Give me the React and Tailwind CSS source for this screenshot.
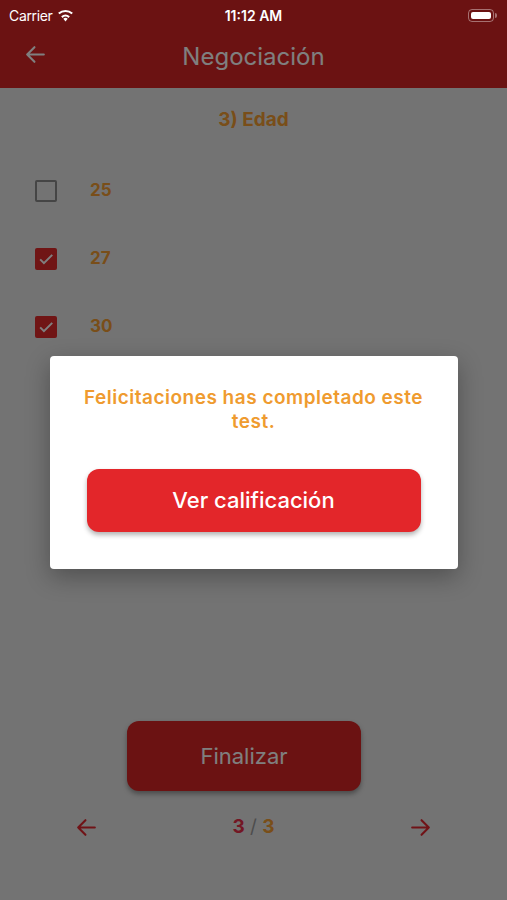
import React, { useState } from "react";

const options = [
  { label: "25", checked: false },
  { label: "27", checked: true },
  { label: "30", checked: true },
];

function Arrow({ dir = "left", className }) {
  return (
    <svg
      viewBox="0 0 24 24"
      className={className}
      fill="none"
      stroke="currentColor"
      strokeWidth="2"
      strokeLinecap="round"
      strokeLinejoin="round"
    >
      {dir === "left" ? (
        <path d="M20 12H4M11 5l-7 7 7 7" />
      ) : (
        <path d="M4 12h16M13 5l7 7-7 7" />
      )}
    </svg>
  );
}

function StatusBar() {
  return (
    <div className="relative z-20 h-[30px] flex items-center justify-between px-[9px] text-white">
      <div className="flex items-center gap-[5px] w-[120px]">
        <span className="text-[14px] font-['Inter'] tracking-tight">Carrier</span>
        <svg viewBox="0 0 20 15" className="w-[17px] h-[13px]" fill="currentColor">
          <path d="M10 14.5l2.6-3.1a4 4 0 0 0-5.2 0z" />
          <path d="M4.9 8.4l1.6 1.9a5.4 5.4 0 0 1 7 0l1.6-1.9a7.9 7.9 0 0 0-10.2 0z" />
          <path d="M1.3 4.2l1.6 1.9a10.9 10.9 0 0 1 14.2 0l1.6-1.9a13.4 13.4 0 0 0-17.4 0z" />
        </svg>
      </div>
      <span className="text-[14px] font-semibold font-['Inter']">11:12 AM</span>
      <div className="w-[120px] flex justify-end pr-[1px]">
        <div className="flex items-center">
          <div className="w-[26px] h-[13px] rounded-[4px] border border-white/40 p-[2px]">
            <div className="w-full h-full bg-white rounded-[2px]" />
          </div>
          <div className="w-[2px] h-[5px] bg-white/40 rounded-r-sm ml-[1px]" />
        </div>
      </div>
    </div>
  );
}

export default function App() {
  const [items, setItems] = useState(options);

  const toggle = (i) =>
    setItems(items.map((it, idx) => (idx === i ? { ...it, checked: !it.checked } : it)));

  return (
    <div className="relative w-[507px] h-[900px] overflow-hidden bg-[#e6e6e6] font-['Inter',sans-serif]">
      <header className="bg-[#d62424]">
        <StatusBar />
        <div className="h-[58px] flex items-center relative">
          <Arrow dir="left" className="absolute left-[23px] top-[12px] w-[25px] h-[25px] text-white" />
          <h1 className="flex-1 text-center text-[24px] text-[#ffffff] pb-[5px]">Negociación</h1>
        </div>
      </header>

      <main className="flex flex-col h-[812px]">
        <h2 className="text-center text-[19px] font-bold text-[#f39c32] mt-[18px]">3) Edad</h2>

        <ul className="flex flex-col gap-[46px] mt-[45px] pl-[35px]">
          {items.map((it, i) => (
            <li key={it.label} className="flex items-center h-[22px]">
              <button
                onClick={() => toggle(i)}
                className={
                  it.checked
                    ? "w-[22px] h-[22px] rounded-[2px] bg-[#e02a2a] flex items-center justify-center"
                    : "w-[22px] h-[22px] rounded-[2px] border-[2.5px] border-[#8a8a8a]"
                }
              >
                {it.checked && (
                  <svg viewBox="0 0 24 24" className="w-[20px] h-[20px]" fill="none" stroke="#ffffff" strokeWidth="2.4">
                    <path d="M5 12.5l4.5 4.5L19.5 7" />
                  </svg>
                )}
              </button>
              <span className="ml-[33px] text-[17px] font-bold text-[#f39c32]">{it.label}</span>
            </li>
          ))}
        </ul>

        <div className="flex-1" />

        <button className="self-start ml-[127px] w-[234px] h-[70px] rounded-[12px] bg-[#d62424] text-white text-[22px] shadow-[0_3px_5px_rgba(0,0,0,0.35)]">
          Finalizar
        </button>

        <div className="flex items-center justify-between px-[74px] mt-[24px] mb-[61px] h-[24px]">
          <Arrow dir="left" className="w-[25px] h-[25px] text-[#e0262e]" />
          <span className="text-[19px] font-bold">
            <span className="text-[#e62e48]">3</span>
            <span className="text-[#9a9a9a] font-normal"> / </span>
            <span className="text-[#f39c32]">3</span>
          </span>
          <Arrow dir="right" className="w-[25px] h-[25px] text-[#e0262e]" />
        </div>
      </main>

      <div className="absolute inset-0 z-10 bg-black/50 flex items-start justify-center pt-[356px]">
        <div className="w-[408px] h-[213px] bg-white rounded-[4px] shadow-[0_8px_24px_rgba(0,0,0,0.3)] flex flex-col items-center">
          <p className="mt-[30px] w-[345px] text-center text-[19px] leading-[24px] tracking-[0.5px] font-semibold text-[#ef9b2f]">
            Felicitaciones has completado este test.
          </p>
          <button className="mt-[35px] w-[334px] h-[63px] rounded-[12px] bg-[#e3262a] text-white text-[22px] font-medium shadow-[0_3px_5px_rgba(0,0,0,0.3)]">
            Ver calificación
          </button>
        </div>
      </div>
    </div>
  );
}
